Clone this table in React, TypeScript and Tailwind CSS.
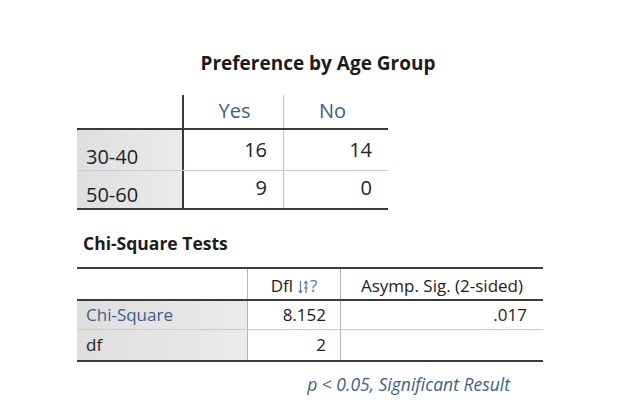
import React from "react";

const font = { fontFamily: '"Open Sans", "Noto Sans", sans-serif' };

function SortArrows() {
  return (
    <svg width="11" height="14" viewBox="0 0 11 14" className="ml-[5px] mt-[2px]" fill="none" stroke="#5a7aa3" strokeWidth="1.2">
      <path d="M2.5 1 V12.5 M0.8 10.5 L2.5 12.8 L4.2 10.5" />
      <path d="M8 13 V1.5 M6.3 3.5 L8 1.2 L9.7 3.5" />
      <path d="M6.2 8 H9.8" />
    </svg>
  );
}

export default function App() {
  return (
    <div className="w-[624px] h-[416px] bg-white text-[#222] relative overflow-hidden" style={font}>
      <div className="pt-[50px] pl-[77px]">
        <div className="w-[482px] text-center text-[19px] font-bold leading-[26px] text-[#1c1c1c]">
          Preference by Age Group
        </div>
        {/* Table 1 */}
        <div className="mt-[19px] w-[311px] text-[20px]">
          <div className="flex h-[35px] border-b-2 border-[#3a3a3a]">
            <div className="w-[107px] border-r-2 border-[#3a3a3a]" />
            <div className="w-[100px] border-r border-[#b9c4d0] flex items-center justify-center text-[#3e5f89] pl-[2px] pb-[2px]">Yes</div>
            <div className="flex-1 flex items-center text-[#3e5f89] pl-[35px] pb-[2px]">No</div>
          </div>
          <div className="flex h-[41px] border-b border-[#c4ccd6]">
            <div className="w-[107px] border-r-2 border-[#3a3a3a] bg-gradient-to-r from-[#dedede] to-[#ebebeb] flex items-end pl-[9px] pb-0 leading-[26px]">30-40</div>
            <div className="w-[100px] border-r border-[#b9c4d0] flex items-start justify-end pr-[16px] pt-[6px] leading-[28px]">16</div>
            <div className="flex-1 flex items-start justify-end pr-[16px] pt-[6px] leading-[28px]">14</div>
          </div>
          <div className="flex h-[39px] border-b-2 border-[#3a3a3a]">
            <div className="w-[107px] border-r-2 border-[#3a3a3a] bg-gradient-to-r from-[#dedede] to-[#ebebeb] flex items-end pl-[9px] pb-0 leading-[27px]">50-60</div>
            <div className="w-[100px] border-r border-[#b9c4d0] flex items-center justify-end pr-[16px] pb-[4px] leading-[28px]">9</div>
            <div className="flex-1 flex items-center justify-end pr-[16px] pb-[4px] leading-[28px]">0</div>
          </div>
        </div>
        {/* Chi-Square title */}
        <div className="mt-[21px] pl-[6px] text-[17.5px] font-bold leading-[24px] text-[#1c1c1c]">Chi-Square Tests</div>
        {/* Table 2 */}
        <div className="mt-[12px] w-[466px] text-[17px] border-t-2 border-[#3a3a3a]">
          <div className="flex h-[32px] border-b-2 border-[#3a3a3a]">
            <div className="w-[171px] border-r border-[#b5b5b5]" />
            <div className="w-[93px] border-r border-[#b5b5b5] flex items-center justify-center pt-[3px]">
              <span>Dfl</span>
              <SortArrows />
              <span className="text-[#5a7aa3] ml-[1px]">?</span>
            </div>
            <div className="flex-1 flex items-center justify-center pt-[3px]">Asymp. Sig. (2-sided)</div>
          </div>
          <div className="flex h-[29px] border-b border-[#c4ccd6]">
            <div className="w-[171px] border-r border-[#b5b5b5] bg-gradient-to-r from-[#dedede] to-[#ebebeb] flex items-center pl-[9px] text-[#3e5f89]">Chi-Square</div>
            <div className="w-[93px] border-r border-[#b5b5b5] flex items-center justify-end pr-[14px]">8.152</div>
            <div className="flex-1 flex items-center justify-end pr-[16px]">.017</div>
          </div>
          <div className="flex h-[32px] border-b-2 border-[#3a3a3a]">
            <div className="w-[171px] border-r border-[#b5b5b5] bg-gradient-to-r from-[#dedede] to-[#ebebeb] flex items-center pl-[9px]">df</div>
            <div className="w-[93px] border-r border-[#b5b5b5] flex items-center justify-end pr-[14px]">2</div>
            <div className="flex-1" />
          </div>
        </div>
        <div className="mt-[10px] w-[433px] text-right text-[17.5px] italic text-[#3e5f89] leading-[24px]">
          p &lt; 0.05, Significant Result
        </div>
      </div>
    </div>
  );
}
